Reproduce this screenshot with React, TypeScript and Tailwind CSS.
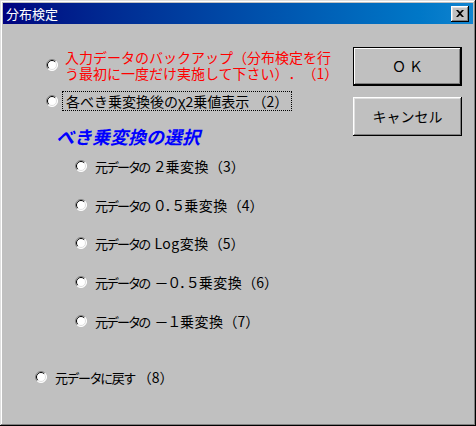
import React from 'react';

const font = "font-['Noto_Sans_CJK_JP',sans-serif] [text-spacing-trim:space-all]";

// classic sunken radio button
const Radio: React.FC = () => (
  <svg width="12" height="12" viewBox="0 0 12 12" className="shrink-0">
    <circle cx="6" cy="6" r="5.5" fill="#fff" />
    <path d="M2.1 9.9 A5.5 5.5 0 0 1 9.9 2.1" fill="none" stroke="#808080" strokeWidth="1" />
    <path d="M9.9 2.1 A5.5 5.5 0 0 1 2.1 9.9" fill="none" stroke="#ffffff" strokeWidth="1" />
    <path d="M2.8 9.2 A4.5 4.5 0 0 1 9.2 2.8" fill="none" stroke="#000" strokeWidth="1" />
    <path d="M9.2 2.8 A4.5 4.5 0 0 1 2.8 9.2" fill="none" stroke="#dfdfdf" strokeWidth="1" />
  </svg>
);

const SubOption: React.FC<{ body: string; num: string; className?: string }> = ({ body, num, className }) => (
  <div className={`flex items-center h-[16px] ml-[72px] gap-[8px] ${className ?? ''}`}>
    <Radio />
    <span className="text-[14px] leading-[16px] text-black whitespace-nowrap">
      <span className="text-[13px] tracking-[-1.5px] [font-feature-settings:'palt']">元データの</span>
      <span className="ml-[5px] tracking-[0.5px] [font-feature-settings:'palt']">{body}</span>
      <span>（{num}）</span>
    </span>
  </div>
);

const App: React.FC = () => {
  return (
    <div
      className={`w-[476px] h-[426px] bg-[#c0c0c0] p-[3px] flex flex-col ${font} shadow-[inset_-1px_-1px_0_#000,inset_1px_1px_0_#dfdfdf,inset_-2px_-2px_0_#808080,inset_2px_2px_0_#fff]`}
    >
      {/* title bar */}
      <div className="h-[21px] flex items-center justify-between bg-gradient-to-r from-[#000080] to-[#1084d0] pl-[3px] pr-[4px]">
        <span className="text-white text-[13px] leading-[16px]">分布検定</span>
        <button className="w-[18px] h-[16px] bg-[#c0c0c0] flex items-center justify-center shadow-[inset_-1px_-1px_0_#000,inset_1px_1px_0_#fff,inset_-2px_-2px_0_#808080,inset_2px_2px_0_#dfdfdf]">
          <svg width="8" height="7" viewBox="0 0 8 7">
            <path d="M0 0h2l2 2 2-2h2L5 3.5 8 7H6L4 5 2 7H0l3-3.5z" fill="#000" />
          </svg>
        </button>
      </div>

      <div className="flex flex-1">
        {/* options */}
        <div className="w-[350px] flex flex-col">
          <div className="flex items-center mt-[25px] ml-[43px] gap-[7px]">
            <Radio />
            <div className="text-[14px] leading-[16px] text-[#ff0000] whitespace-nowrap">
              <div>入力データのバックアップ（分布検定を行</div>
              <div>う最初に一度だけ実施して下さい）．（1）</div>
            </div>
          </div>

          <div className="flex items-center mt-[10px] ml-[43px] gap-[4px]">
            <Radio />
            <div className="h-[20px] border border-dotted border-black px-[3px] flex items-center text-[14px] leading-[16px] text-black whitespace-nowrap">
              各べき乗変換後のχ2乗値表示 （2）
            </div>
          </div>

          <div className="mt-[14px] ml-[53px] text-[18px] leading-[22px] font-bold italic text-[#0000ff] whitespace-nowrap">
            べき乗変換の選択
          </div>

          <SubOption className="mt-[11px]" body="２乗変換" num="3" />
          <SubOption className="mt-[23px]" body="０．５乗変換" num="4" />
          <SubOption className="mt-[22px]" body="Log変換" num="5" />
          <SubOption className="mt-[23px]" body="－０．５乗変換" num="6" />
          <SubOption className="mt-[23px]" body="－１乗変換" num="7" />

          <div className="flex items-center h-[16px] mt-[40px] ml-[32px] gap-[8px]">
            <Radio />
            <span className="text-[14px] leading-[16px] text-black whitespace-nowrap">
              <span className="text-[13px] tracking-[-1px] [font-feature-settings:'palt']">元データに戻す</span>
              <span> （8）</span>
            </span>
          </div>
        </div>

        {/* buttons */}
        <div className="w-[109px] flex flex-col">
          <button className="mt-[23px] h-[39px] bg-[#c0c0c0] border border-black text-[14px] text-black shadow-[inset_-1px_-1px_0_#000,inset_1px_1px_0_#fff,inset_-2px_-2px_0_#808080]">
            Ｏ Ｋ
          </button>
          <button className="mt-[11px] h-[39px] bg-[#c0c0c0] text-[14px] text-black shadow-[inset_-1px_-1px_0_#000,inset_1px_1px_0_#fff,inset_-2px_-2px_0_#808080,inset_2px_2px_0_#dfdfdf]">
            キャンセル
          </button>
        </div>
      </div>
    </div>
  );
};

export default App;
